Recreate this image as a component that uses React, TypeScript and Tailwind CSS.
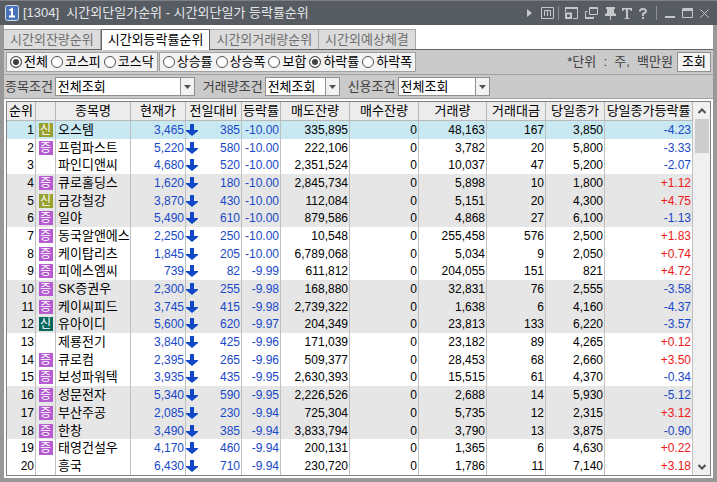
import { ReactNode } from "react";

const tabs = ["시간외잔량순위", "시간외등락률순위", "시간외거래량순위", "시간외예상체결"];

const markets = ["전체", "코스피", "코스닥"];
const sorts = ["상승률", "상승폭", "보합", "하락률", "하락폭"];

const columns = [
	{ title: "순위", width: "w-[29px]" },
	{ title: "", width: "w-[20px]" },
	{ title: "종목명", width: "w-[75px]" },
	{ title: "현재가", width: "w-[55px]" },
	{ title: "전일대비", width: "w-[56px]" },
	{ title: "등락률", width: "w-[39px]" },
	{ title: "매도잔량", width: "w-[69px]" },
	{ title: "매수잔량", width: "w-[69px]" },
	{ title: "거래량", width: "w-[68px]" },
	{ title: "거래대금", width: "w-[59px]" },
	{ title: "당일종가", width: "w-[59px]" },
	{ title: "당일종가등락률", width: "w-auto" },
];

const badges: Record<string, { text: string; color: string }> = {
	new: { text: "신", color: "bg-[#98a030]" },
	margin: { text: "증", color: "bg-[#b45cd0]" },
	credit: { text: "신", color: "bg-[#086860]" },
};

// badge, name, price, change, rate, ask, bid, volume, amount, close, close rate
const stocks = [
	["new", "오스템", "3,465", "385", "-10.00", "335,895", "0", "48,163", "167", "3,850", "-4.23"],
	["margin", "프럼파스트", "5,220", "580", "-10.00", "222,106", "0", "3,782", "20", "5,800", "-3.33"],
	["", "파인디앤씨", "4,680", "520", "-10.00", "2,351,524", "0", "10,037", "47", "5,200", "-2.07"],
	["margin", "큐로홀딩스", "1,620", "180", "-10.00", "2,845,734", "0", "5,898", "10", "1,800", "+1.12"],
	["new", "금강철강", "3,870", "430", "-10.00", "112,084", "0", "5,151", "20", "4,300", "+4.75"],
	["margin", "일야", "5,490", "610", "-10.00", "879,586", "0", "4,868", "27", "6,100", "-1.13"],
	["margin", "동국알앤에스", "2,250", "250", "-10.00", "10,548", "0", "255,458", "576", "2,500", "+1.83"],
	["margin", "케이탑리츠", "1,845", "205", "-10.00", "6,789,068", "0", "5,034", "9", "2,050", "+0.74"],
	["margin", "피에스엠씨", "739", "82", "-9.99", "611,812", "0", "204,055", "151", "821", "+4.72"],
	["margin", "SK증권우", "2,300", "255", "-9.98", "168,880", "0", "32,831", "76", "2,555", "-3.58"],
	["margin", "케이씨피드", "3,745", "415", "-9.98", "2,739,322", "0", "1,638", "6", "4,160", "-4.37"],
	["credit", "유아이디", "5,600", "620", "-9.97", "204,349", "0", "23,813", "133", "6,220", "-3.57"],
	["", "제룡전기", "3,840", "425", "-9.96", "171,039", "0", "23,182", "89", "4,265", "+0.12"],
	["margin", "큐로컴", "2,395", "265", "-9.96", "509,377", "0", "28,453", "68", "2,660", "+3.50"],
	["margin", "보성파워텍", "3,935", "435", "-9.95", "2,630,393", "0", "15,515", "61", "4,370", "-0.34"],
	["margin", "성문전자", "5,340", "590", "-9.95", "2,226,526", "0", "2,688", "14", "5,930", "-5.12"],
	["margin", "부산주공", "2,085", "230", "-9.94", "725,304", "0", "5,735", "12", "2,315", "+3.12"],
	["margin", "한창", "3,490", "385", "-9.94", "3,833,794", "0", "3,790", "13", "3,875", "-0.90"],
	["margin", "태영건설우", "4,170", "460", "-9.94", "200,131", "0", "1,365", "6", "4,630", "+0.22"],
	["", "흥국", "6,430", "710", "-9.94", "230,720", "0", "1,786", "11", "7,140", "+3.18"],
];

const rowColor = (index: number) => {
	if (index === 0) return "bg-[#c8e8f2]";
	return Math.floor(index / 3) % 2 === 1 ? "bg-[#e6e6e6]" : "bg-white";
};

const IconButton = ({ label, width, children }: { label: string; width: string; children: ReactNode }) => (
	<button
		type="button"
		aria-label={label}
		className={`flex h-4 items-center justify-center ${width}`}>
		{children}
	</button>
);

const TitleBar = () => {
	return (
		<header className="flex h-[25px] shrink-0 items-center border-t border-[#7c8084] bg-[#565c62] px-[5px] text-[#e4e6e8]">
			<svg width="14" height="16" viewBox="0 0 14 16" className="shrink-0">
				<rect x="0.5" y="0.5" width="13" height="15" rx="2" fill="#4a74b8" stroke="#d4dce8" />
				<path d="M4.5 5.5L7 4v7.5M4 11.5h6" fill="none" stroke="#fff" strokeWidth="2" />
			</svg>
			<h1 className="ml-1 flex-1 whitespace-pre">[1304]  시간외단일가순위 - 시간외단일가 등락률순위</h1>
			<div className="flex items-center text-[#c4c8cb]">
				<IconButton label="펼치기" width="w-4">
					<svg width="5" height="8" viewBox="0 0 5 8" fill="currentColor">
						<path d="M0 0l5 4-5 4z" />
					</svg>
				</IconButton>
				<IconButton label="메모" width="w-5">
					<svg width="13" height="12" viewBox="0 0 13 12" fill="none" stroke="currentColor">
						<path d="M0.5 0.5h12v11h-12zM3.5 9V3.5h6V9M6.5 3.5V9" />
					</svg>
				</IconButton>
				<span className="ml-px mr-[2px] h-[14px] w-px bg-[#8c9094]" />
				<IconButton label="크기" width="w-5">
					<svg width="13" height="12" viewBox="0 0 13 12" fill="none" stroke="currentColor">
						<path d="M0.5 5V0M0 0.5h13M0 1.500h13M12.5 0v11.5H8" />
						<path d="M1 6.500h5V11H1z" strokeWidth="2" />
					</svg>
				</IconButton>
				<IconButton label="새 창" width="w-5">
					<svg width="13" height="12" viewBox="0 0 13 12" fill="none" stroke="currentColor">
						<path d="M4.5 0.5h8v7h-8zM4 1.5h9M2.5 4.5h-2v7h8v-2M0 10.500h9" />
					</svg>
				</IconButton>
				<IconButton label="고정" width="w-[18px]">
					<svg width="11" height="13" viewBox="0 0 11 13" fill="currentColor">
						<path d="M1 0h9v2H9v4l2 1v2H6v4H5V9H0V7l2-1V2H1z" />
					</svg>
				</IconButton>
				<IconButton label="글꼴" width="w-4">
					<svg width="10" height="11" viewBox="0 0 10 11" fill="currentColor">
						<path d="M0 0h10v3H9L8 1.500H6V10h1.500v1h-5v-1H4V1.500H2L1 3H0z" />
					</svg>
				</IconButton>
				<IconButton label="도움말" width="w-4">
					<svg width="8" height="11" viewBox="0 0 8 11" fill="none" stroke="currentColor" strokeWidth="2">
						<path d="M1 3.500V2.500Q1.500 1 4 1t3 2q0 1.500-3 3v2M4 9v2" />
					</svg>
				</IconButton>
				<span className="mx-[5px] h-[14px] w-px bg-[#8c9094]" />
				<IconButton label="최소화" width="w-4">
					<svg width="10" height="10" viewBox="0 0 10 10" fill="currentColor">
						<path d="M0 8h10v2H0z" />
					</svg>
				</IconButton>
				<IconButton label="최대화" width="w-[18px]">
					<svg width="11" height="10" viewBox="0 0 11 10" fill="none" stroke="currentColor">
						<path d="M0.5 0.5h10v9h-10zM0 1.500h11M0 2.500h11" />
					</svg>
				</IconButton>
				<IconButton label="닫기" width="w-4">
					<svg width="9" height="9" viewBox="0 0 9 9" fill="none" stroke="currentColor">
						<path d="M0.5 0.5l8 8M8.500 0.500l-8 8" />
					</svg>
				</IconButton>
			</div>
		</header>
	);
};

const RadioGroup = ({ name, items, checked }: { name: string; items: string[]; checked: string }) => {
	return (
		<div
			role="radiogroup"
			className="flex h-5 items-center gap-[3px] border border-[#a0a0a0] bg-[#f2f2f2] px-[3px]">
			{items.map((item) => (
				<label key={item} className="flex items-center gap-[2px] whitespace-nowrap leading-4 text-black">
					<input
						type="radio"
						name={name}
						defaultChecked={item === checked}
						className="size-3 shrink-0 appearance-none rounded-full border border-[#505050] bg-white checked:bg-[#404040] checked:shadow-[inset_0_0_0_2px_white]"
					/>
					{item}
				</label>
			))}
		</div>
	);
};

const Filter = ({ label, width }: { label: string; width: string }) => {
	return (
		<label className="flex items-center gap-[2px] whitespace-nowrap">
			{label}
			<span className={`relative flex h-[19px] border border-[#909090] bg-white ${width}`}>
				<select className="w-full appearance-none pl-[2px] leading-4 text-black outline-none">
					<option>전체조회</option>
				</select>
				<span className="pointer-events-none absolute inset-y-0 right-0 flex w-[14px] items-center justify-center border-l border-[#909090] bg-[#f2f2f2]">
					<svg width="7" height="4" viewBox="0 0 7 4" fill="#505050">
						<path d="M0 0h7L3.500 4z" />
					</svg>
				</span>
			</span>
		</label>
	);
};

const StockTable = () => {
	const cell = "border-r border-[#c0c0c0] p-0 pr-px text-right text-[12px]";
	return (
		<table className="h-full w-full table-fixed border-separate border-spacing-0 text-black">
			<colgroup>
				{columns.map((column, i) => (
					<col key={i} className={column.width} />
				))}
			</colgroup>
			<thead>
				<tr className="h-[19px] bg-[#ececec]">
					{columns.map((column, i) => (
						<th
							key={i}
							className="whitespace-nowrap border-b border-r border-[#b8b8b8] p-0 font-normal leading-4">
							{column.title}
						</th>
					))}
				</tr>
			</thead>
			<tbody className="leading-4">
				{stocks.map(([badge, name, price, change, rate, ask, bid, volume, amount, close, closeRate], i) => (
					<tr key={name} className={rowColor(i)}>
						<td className={cell}>{i + 1}</td>
						<td className="border-r border-[#c0c0c0] p-0">
							{badge && (
								<span
									className={`mx-auto flex h-[14px] w-[14px] items-center justify-center text-[12px] leading-3 text-white ${badges[badge].color}`}>
									{badges[badge].text}
								</span>
							)}
						</td>
						<td className="whitespace-nowrap border-r border-[#c0c0c0] p-0 pl-[2px]">{name}</td>
						<td className={`${cell} text-[#1848c8]`}>{price}</td>
						<td className={`${cell} text-[#1848c8]`}>
							<div className="flex items-center justify-between">
								<svg width="12" height="12" viewBox="0 0 12 12" fill="#1048c8">
									<path d="M4 0h4v6h4v1l-6 5-6-5V6h4z" />
								</svg>
								{change}
							</div>
						</td>
						<td className={`${cell} text-[#1848c8]`}>{rate}</td>
						<td className={cell}>{ask}</td>
						<td className={cell}>{bid}</td>
						<td className={cell}>{volume}</td>
						<td className={cell}>{amount}</td>
						<td className={cell}>{close}</td>
						<td className={`${cell} ${closeRate.startsWith("+") ? "text-[#f01818]" : "text-[#1848c8]"}`}>
							{closeRate}
						</td>
					</tr>
				))}
			</tbody>
		</table>
	);
};

const ScrollBar = () => {
	return (
		<div className="flex w-[17px] shrink-0 flex-col items-center bg-[#f0f0f0]">
			<button type="button" aria-label="위로" className="flex h-[17px] w-full items-center justify-center">
				<svg width="8" height="6" viewBox="0 0 8 6" fill="none" stroke="#505050" strokeWidth="2">
					<path d="M0.500 5L4 1.500 7.500 5" />
				</svg>
			</button>
			<div className="h-[34px] w-[14px] bg-[#cdcdcd]" />
			<button type="button" aria-label="아래로" className="mt-auto flex h-[17px] w-full items-center justify-center">
				<svg width="8" height="6" viewBox="0 0 8 6" fill="none" stroke="#505050" strokeWidth="2">
					<path d="M0.500 1L4 4.500 7.500 1" />
				</svg>
			</button>
		</div>
	);
};

const App = () => {
	return (
		<div className="flex h-screen flex-col bg-[#989898] font-['Liberation_Sans','Noto_Sans_CJK_KR',sans-serif] text-[13px] text-[#404040]">
			<TitleBar />
			<main className="mx-1 mb-1 flex flex-1 flex-col bg-white">
				<nav className="flex h-[25px] items-end border-b border-[#606468]">
					{tabs.map((tab, i) => (
						<button
							key={tab}
							type="button"
							className={
								i === 1
									? "-mb-px h-[21px] border-x border-t border-[#606468] bg-white px-[6px] leading-4 text-black"
									: "h-5 border-r border-t border-[#a8a8a8] bg-[#dcdcdc] px-[6px] leading-4 text-[#707070]"
							}>
							{tab}
						</button>
					))}
				</nav>
				<div className="flex h-[25px] items-center gap-px border-b border-[#a0a0a0] bg-[#cacaca] px-[2px]">
					<RadioGroup name="market" items={markets} checked="전체" />
					<RadioGroup name="sort" items={sorts} checked="하락률" />
					<p className="ml-auto whitespace-pre">*단위  :  주,  백만원</p>
					<button
						type="button"
						className="ml-[3px] h-5 w-[34px] border border-[#909090] bg-[#f4f4f4] leading-4 text-black">
						조회
					</button>
				</div>
				<div className="flex h-6 items-center gap-2 border-b border-[#a0a0a0] bg-[#cacaca] px-px">
					<Filter label="종목조건" width="w-[140px]" />
					<Filter label="거래량조건" width="w-[75px]" />
					<Filter label="신용조건" width="w-[92px]" />
				</div>
				<div className="flex min-h-0 flex-1 p-[2px]">
					<div className="flex flex-1 border border-[#808080]">
						<div className="min-w-0 flex-1">
							<StockTable />
						</div>
						<ScrollBar />
					</div>
				</div>
			</main>
		</div>
	);
};

export default App;
